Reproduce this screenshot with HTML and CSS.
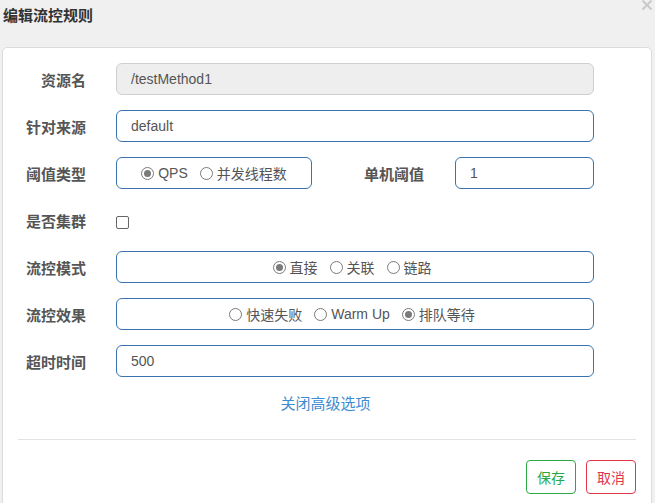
FILE: index.html
```html
<!DOCTYPE html>
<html lang="zh-CN">
<head>
<meta charset="utf-8">
<title>编辑流控规则</title>
<link rel="stylesheet" href="styles.css">
</head>
<body>
<div class="dialog">
  <div class="header">
    <h3 class="title">编辑流控规则</h3>
    <span class="close" aria-label="close">
      <svg width="12" height="12" viewBox="0 0 12 12"><path d="M1.5 1.5 L10.5 10.5 M10.5 1.5 L1.5 10.5" stroke="#c9c9c9" stroke-width="2" fill="none"/></svg>
    </span>
  </div>
  <div class="panel">
    <div class="form">
      <div class="row">
        <label class="lbl">资源名</label>
        <div class="input readonly">/testMethod1</div>
      </div>
      <div class="row">
        <label class="lbl">针对来源</label>
        <div class="input">default</div>
      </div>
      <div class="row">
        <label class="lbl">阈值类型</label>
        <div class="radios short">
          <span class="opt"><span class="radio checked"></span>QPS</span>
          <span class="opt"><span class="radio"></span>并发线程数</span>
        </div>
        <label class="lbl2">单机阈值</label>
        <div class="input small">1</div>
      </div>
      <div class="row">
        <label class="lbl">是否集群</label>
        <span class="checkbox"></span>
      </div>
      <div class="row">
        <label class="lbl">流控模式</label>
        <div class="radios">
          <span class="opt"><span class="radio checked"></span>直接</span>
          <span class="opt"><span class="radio"></span>关联</span>
          <span class="opt"><span class="radio"></span>链路</span>
        </div>
      </div>
      <div class="row">
        <label class="lbl">流控效果</label>
        <div class="radios">
          <span class="opt"><span class="radio"></span>快速失败</span>
          <span class="opt"><span class="radio"></span>Warm Up</span>
          <span class="opt"><span class="radio checked"></span>排队等待</span>
        </div>
      </div>
      <div class="row">
        <label class="lbl">超时时间</label>
        <div class="input">500</div>
      </div>
    </div>
    <div class="toggle"><a class="link">关闭高级选项</a></div>
    <hr class="sep">
    <div class="footer">
      <button class="btn save">保存</button>
      <button class="btn cancel">取消</button>
    </div>
  </div>
</div>
</body>
</html>
```
FILE: styles.css
```css
html, body {
  margin: 0;
  padding: 0;
  background: #f0f0f0;
  font-family: "Liberation Sans", "Noto Sans CJK SC", sans-serif;
  color: #555;
}
.dialog {
  width: 655px;
  height: 503px;
  overflow: hidden;
  position: relative;
}
.header {
  height: 47px;
  padding: 6px 3px 0;
  box-sizing: border-box;
}
.title {
  margin: 0;
  font-size: 15px;
  line-height: 20px;
  font-weight: bold;
  color: #333;
}
.close {
  position: absolute;
  top: -1px;
  right: 2px;
  width: 12px;
  height: 12px;
  line-height: 0;
}
.panel {
  margin: 0 3px 0 2px;
  background: #fff;
  border: 1px solid #dcdcdc;
  border-radius: 5px;
  padding-top: 15px;
  height: 480px;
  box-sizing: border-box;
}
.form {
  display: flex;
  flex-direction: column;
  gap: 15px;
  padding: 0 57px 0 15px;
}
.row {
  display: flex;
  align-items: center;
  height: 32px;
}
.lbl {
  width: 68px;
  margin-right: 30px;
  text-align: right;
  font-size: 15px;
  font-weight: bold;
  color: #555;
  flex: none;
}
.lbl2 {
  flex: 1;
  text-align: right;
  padding-right: 31px;
  font-size: 15px;
  font-weight: bold;
  color: #555;
}
.input {
  flex: 1;
  height: 32px;
  box-sizing: border-box;
  border: 1px solid #3873b0;
  border-radius: 6px;
  padding: 0 14px;
  font-size: 14px;
  line-height: 30px;
  color: #555;
}
.input.readonly {
  background: #eeeeee;
  border-color: #cfcfcf;
}
.input.small {
  flex: none;
  width: 139px;
}
.radios {
  flex: 1;
  height: 32px;
  box-sizing: border-box;
  border: 1px solid #3873b0;
  border-radius: 6px;
  display: flex;
  align-items: center;
  justify-content: center;
  gap: 12px;
  font-size: 14px;
  color: #555;
  padding-right: 6px;
}
.radios.short {
  flex: none;
  width: 196px;
  padding-right: 0;
}
.opt {
  display: flex;
  align-items: center;
  gap: 4px;
  white-space: nowrap;
}
.radio {
  width: 13px;
  height: 13px;
  box-sizing: border-box;
  border: 1px solid #7a7a7a;
  border-radius: 50%;
  background: #fff;
  position: relative;
  flex: none;
}
.radio.checked::after {
  content: "";
  position: absolute;
  left: 2px;
  top: 2px;
  width: 7px;
  height: 7px;
  border-radius: 50%;
  background: #7a7a7a;
}
.checkbox {
  width: 13px;
  height: 13px;
  box-sizing: border-box;
  border: 1px solid #666;
  border-radius: 2px;
  background: #fff;
  margin-top: 4px;
}
.toggle {
  text-align: center;
  margin-top: 17px;
  line-height: 20px;
  padding-right: 3px;
}
.link {
  font-size: 15px;
  color: #3d8bd0;
  cursor: pointer;
}
.sep {
  margin: 25px 15px 0;
  border: 0;
  border-top: 1px solid #e3e3e3;
  height: 0;
}
.footer {
  display: flex;
  justify-content: flex-end;
  gap: 10px;
  padding: 20px 15px 0;
}
.btn {
  width: 50px;
  height: 34px;
  background: #fff;
  border: 1px solid;
  border-radius: 4px;
  font-family: "Liberation Sans", "Noto Sans CJK SC", sans-serif;
  font-size: 14px;
  padding: 0;
}
.save {
  border-color: #2aa845;
  color: #2aa845;
}
.cancel {
  border-color: #e0364a;
  color: #e0364a;
}
```
